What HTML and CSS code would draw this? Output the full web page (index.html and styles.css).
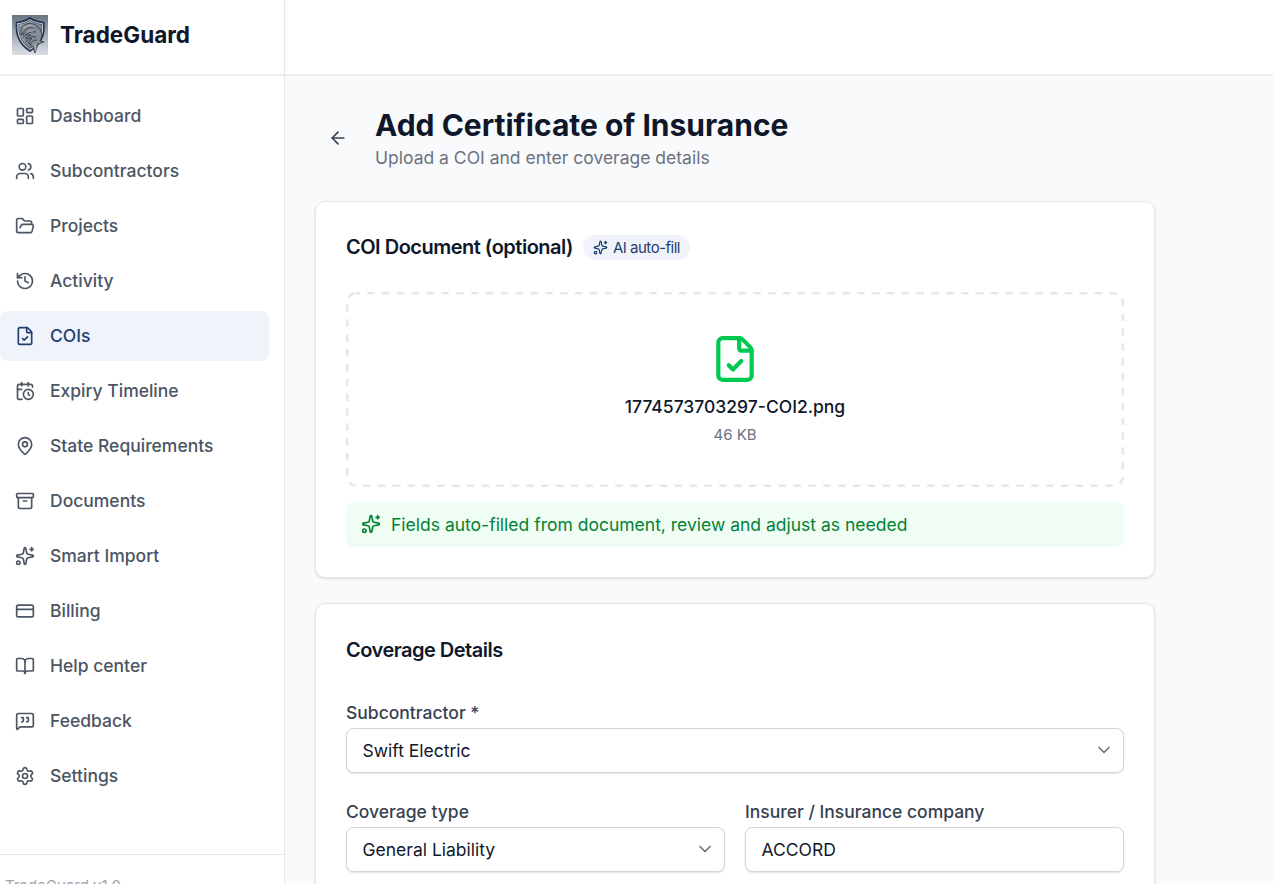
FILE: index.html
```html
<!DOCTYPE html>
<html lang="en">
<head>
    <meta charset="UTF-8">
    <meta name="viewport" content="width=device-width, initial-scale=1.0">
    <title>TradeGuard - Add Certificate of Insurance</title>
    <link rel="stylesheet" href="styles.css">
</head>
<body>
    <svg class="sprite" aria-hidden="true">
        <symbol id="sparkles" viewBox="0 0 24 24">
            <path d="M11.017 2.814a1 1 0 0 1 1.966 0l1.051 5.558a2 2 0 0 0 1.594 1.594l5.558 1.051a1 1 0 0 1 0 1.966l-5.558 1.051a2 2 0 0 0-1.594 1.594l-1.051 5.558a1 1 0 0 1-1.966 0l-1.051-5.558a2 2 0 0 0-1.594-1.594l-5.558-1.051a1 1 0 0 1 0-1.966l5.558-1.051a2 2 0 0 0 1.594-1.594z"/>
            <path d="M20 2v4"/><path d="M22 4h-4"/><circle cx="4" cy="20" r="2"/>
        </symbol>
        <symbol id="file-check" viewBox="0 0 24 24">
            <path d="M6 22a2 2 0 0 1-2-2V4a2 2 0 0 1 2-2h8a2.4 2.4 0 0 1 1.704.706l3.588 3.588A2.4 2.4 0 0 1 20 8v12a2 2 0 0 1-2 2z"/>
            <path d="M14 2v5a1 1 0 0 0 1 1h5"/><path d="m9 15 2 2 4-4"/>
        </symbol>
        <symbol id="chevron" viewBox="0 0 24 24"><path d="m6 9 6 6 6-6"/></symbol>
    </svg>

    <div class="app">
        <aside class="sidebar">
            <div class="brand">
                <svg class="logo" viewBox="0 0 36 40">
                    <defs>
                        <linearGradient id="logoBg" x1="0" y1="0" x2="0" y2="1">
                            <stop offset="0" stop-color="#68747e"/>
                            <stop offset=".5" stop-color="#a4abb5"/>
                            <stop offset="1" stop-color="#dcdee4"/>
                        </linearGradient>
                        <linearGradient id="logoShield" x1="0" y1="0" x2="1" y2="1">
                            <stop offset="0" stop-color="#b4bbc4"/>
                            <stop offset="1" stop-color="#5b6673"/>
                        </linearGradient>
                    </defs>
                    <rect width="36" height="40" fill="url(#logoBg)"/>
                    <path d="M18 3C14 6 9 7 4.500 7.500 4 17 5 28 18 36 31 28 33 17 31.500 7.500 27 7 22 6 18 3z" fill="#d5dae1" stroke="#20344f" stroke-width="1.700"/>
                    <path d="M18 5.500C14 8 10 9 6.800 9.300 6.500 18 8 27 18 33.500 28 27 30 18 29.500 9.300 26 9 22 8 18 5.500z" fill="url(#logoShield)" stroke="#344860" stroke-width=".8"/>
                    <path d="M9 12c5-4 11-5 16-1 5 4 6 10 3 15l4 1-6 2-3 9-2-6-5-5 4-3-7-1 6-3-8 0 5-3-7 3z" fill="#858e99" stroke="#303944" stroke-width=".8"/>
                    <path d="M10 19c4-6 8-8 15-6M11 23c3-5 7-7 13-6M14 27c2-4 5-6 10-5M18 30c1-3 3-5 7-5" fill="none" stroke="#303944" stroke-width=".9"/>
                    <path d="M12 13c4-3 8-3 12 0M12 20c3-3 5-4 9-4M23 29l1 7" fill="none" stroke="#c0c8d0" stroke-width=".8"/>
                    <circle cx="27" cy="15" r=".8" fill="#3f9f96"/><circle cx="22" cy="24" r=".8" fill="#4ba77c"/>
                </svg>
                <span class="brand-name">TradeGuard</span>
            </div>

            <nav class="nav">
                <a class="nav-item"><svg class="icon" viewBox="0 0 24 24"><rect width="7" height="9" x="3" y="3" rx="1"/><rect width="7" height="5" x="14" y="3" rx="1"/><rect width="7" height="9" x="14" y="12" rx="1"/><rect width="7" height="5" x="3" y="16" rx="1"/></svg>Dashboard</a>
                <a class="nav-item"><svg class="icon" viewBox="0 0 24 24"><path d="M16 21v-2a4 4 0 0 0-4-4H6a4 4 0 0 0-4 4v2"/><path d="M16 3.128a4 4 0 0 1 0 7.744"/><path d="M22 21v-2a4 4 0 0 0-3-3.870"/><circle cx="9" cy="7" r="4"/></svg>Subcontractors</a>
                <a class="nav-item"><svg class="icon" viewBox="0 0 24 24"><path d="m6 14 1.500-2.900A2 2 0 0 1 9.240 10H20a2 2 0 0 1 1.940 2.500l-1.540 6a2 2 0 0 1-1.950 1.500H4a2 2 0 0 1-2-2V5a2 2 0 0 1 2-2h3.900a2 2 0 0 1 1.690.900l.810 1.200a2 2 0 0 0 1.670.900H18a2 2 0 0 1 2 2v2"/></svg>Projects</a>
                <a class="nav-item"><svg class="icon" viewBox="0 0 24 24"><path d="M3 12a9 9 0 1 0 9-9 9.750 9.750 0 0 0-6.740 2.740L3 8"/><path d="M3 3v5h5"/><path d="M12 7v5l4 2"/></svg>Activity</a>
                <a class="nav-item active"><svg class="icon"><use href="#file-check"/></svg>COIs</a>
                <a class="nav-item"><svg class="icon" viewBox="0 0 24 24"><path d="M16 14v2.200l1.600 1"/><path d="M16 2v4"/><path d="M21 7.500V6a2 2 0 0 0-2-2H5a2 2 0 0 0-2 2v14a2 2 0 0 0 2 2h3.500"/><path d="M3 10h5"/><path d="M8 2v4"/><circle cx="16" cy="16" r="6"/></svg>Expiry Timeline</a>
                <a class="nav-item"><svg class="icon" viewBox="0 0 24 24"><path d="M20 10c0 4.993-5.539 10.193-7.399 11.799a1 1 0 0 1-1.202 0C9.539 20.193 4 14.993 4 10a8 8 0 0 1 16 0"/><circle cx="12" cy="10" r="3"/></svg>State Requirements</a>
                <a class="nav-item"><svg class="icon" viewBox="0 0 24 24"><rect width="20" height="5" x="2" y="3" rx="1"/><path d="M4 8v11a2 2 0 0 0 2 2h12a2 2 0 0 0 2-2V8"/><path d="M10 12h4"/></svg>Documents</a>
                <a class="nav-item"><svg class="icon"><use href="#sparkles"/></svg>Smart Import</a>
                <a class="nav-item"><svg class="icon" viewBox="0 0 24 24"><rect width="20" height="14" x="2" y="5" rx="2"/><path d="M2 10h20"/></svg>Billing</a>
                <a class="nav-item"><svg class="icon" viewBox="0 0 24 24"><path d="M12 7v14"/><path d="M3 18a1 1 0 0 1-1-1V4a1 1 0 0 1 1-1h5a4 4 0 0 1 4 4 4 4 0 0 1 4-4h5a1 1 0 0 1 1 1v13a1 1 0 0 1-1 1h-6a3 3 0 0 0-3 3 3 3 0 0 0-3-3z"/></svg>Help center</a>
                <a class="nav-item"><svg class="icon" viewBox="0 0 24 24"><path d="M22 17a2 2 0 0 1-2 2H6.828a2 2 0 0 0-1.414.586l-2.202 2.202A.710.710 0 0 1 2 21.286V5a2 2 0 0 1 2-2h16a2 2 0 0 1 2 2z"/><path d="M14 13a2 2 0 0 0 2-2V8h-2"/><path d="M8 13a2 2 0 0 0 2-2V8H8"/></svg>Feedback</a>
                <a class="nav-item"><svg class="icon" viewBox="0 0 24 24"><path d="M9.671 4.136a2.340 2.340 0 0 1 4.659 0 2.340 2.340 0 0 0 3.319 1.915 2.340 2.340 0 0 1 2.330 4.033 2.340 2.340 0 0 0 0 3.831 2.340 2.340 0 0 1-2.330 4.033 2.340 2.340 0 0 0-3.319 1.915 2.340 2.340 0 0 1-4.659 0 2.340 2.340 0 0 0-3.320-1.915 2.340 2.340 0 0 1-2.330-4.033 2.340 2.340 0 0 0 0-3.831A2.340 2.340 0 0 1 6.350 6.051a2.340 2.340 0 0 0 3.319-1.915"/><circle cx="12" cy="12" r="3"/></svg>Settings</a>
            </nav>

            <div class="sidebar-footer">TradeGuard v1.0</div>
        </aside>

        <div class="main">
            <header class="topbar"></header>
            <main class="content">
                <div class="page-head">
                    <button class="back" aria-label="Back"><svg class="icon" viewBox="0 0 24 24"><path d="m12 19-7-7 7-7"/><path d="M19 12H5"/></svg></button>
                    <div>
                        <h1>Add Certificate of Insurance</h1>
                        <p class="subtitle">Upload a COI and enter coverage details</p>
                    </div>
                </div>

                <section class="card">
                    <div class="card-head">
                        <h2>COI Document (optional)</h2>
                        <span class="badge"><svg class="icon"><use href="#sparkles"/></svg>AI auto-fill</span>
                    </div>
                    <div class="dropzone">
                        <svg class="drop-outline"><rect x="1.250" y="1.250" width="775.500" height="192.500" rx="8.750"/></svg>
                        <svg class="icon"><use href="#file-check"/></svg>
                        <p class="file-name">1774573703297-COI2.png</p>
                        <p class="file-size">46 KB</p>
                    </div>
                    <div class="notice"><svg class="icon"><use href="#sparkles"/></svg><span>Fields auto-filled from document, review and adjust as needed</span></div>
                </section>

                <section class="card">
                    <div class="card-head details-head">
                        <h2>Coverage Details</h2>
                    </div>
                    <div class="form">
                        <div class="field wide">
                            <label>Subcontractor *</label>
                            <div class="control">Swift Electric<svg class="icon"><use href="#chevron"/></svg></div>
                        </div>
                        <div class="field">
                            <label>Coverage type</label>
                            <div class="control">General Liability<svg class="icon"><use href="#chevron"/></svg></div>
                        </div>
                        <div class="field">
                            <label>Insurer / Insurance company</label>
                            <div class="control">ACCORD</div>
                        </div>
                    </div>
                </section>
            </main>
        </div>
    </div>
</body>
</html>
```
FILE: styles.css
```css
* {
    box-sizing: border-box;
}

body {
    margin: 0;
    font-family: Inter, "Liberation Sans", sans-serif;
    font-size: 17.5px;
    line-height: 25px;
    color: #0f172a;
    background: #f9fafb;
}

h1, h2, p {
    margin: 0;
}

.sprite {
    display: none;
}

.icon {
    width: 20px;
    height: 20px;
    flex-shrink: 0;
    fill: none;
    stroke: currentColor;
    stroke-width: 2;
    stroke-linecap: round;
    stroke-linejoin: round;
}

.app {
    display: flex;
    height: 100vh;
    overflow: hidden;
}

/* sidebar */
.sidebar {
    width: 285px;
    flex-shrink: 0;
    display: flex;
    flex-direction: column;
    background: #fff;
    border-right: 1px solid #e5e7eb;
}

.brand {
    height: 76px;
    flex-shrink: 0;
    display: flex;
    align-items: center;
    gap: 12px;
    padding: 0 12px 4px;
    border-bottom: 2px solid #ededf0;
}

.logo {
    width: 36px;
    height: 40px;
}

.brand-name {
    font-size: 22.5px;
    font-weight: 700;
    line-height: 26px;
}

.nav {
    flex-shrink: 0;
    display: flex;
    flex-direction: column;
    gap: 5px;
    padding: 14.5px 15px 0 0;
}

.nav-item {
    height: 50px;
    display: flex;
    align-items: center;
    gap: 15px;
    padding: 0 15px;
    border-radius: 7.5px;
    font-weight: 500;
    color: #4b5563;
}

.nav-item.active {
    background: #f0f3fa;
    color: #1e4070;
}

.sidebar-footer {
    height: 30px;
    flex-shrink: 0;
    margin-top: auto;
    padding: 21px 5px 0;
    border-top: 1px solid #e5e7eb;
    font-size: 15px;
    line-height: 20px;
    color: #9ca3af;
    overflow: hidden;
}

/* page */
.main {
    flex: 1;
    min-width: 0;
}

.topbar {
    height: 76px;
    background: #fff;
    border-bottom: 2px solid #ededf0;
}

.content {
    width: 900px;
    padding: 29px 30px;
}

.page-head {
    display: flex;
    align-items: center;
    gap: 15px;
    margin-bottom: 30.5px;
}

.back {
    width: 45px;
    height: 45px;
    display: flex;
    align-items: center;
    justify-content: center;
    padding: 0;
    border: none;
    background: none;
    color: #374151;
}

h1 {
    padding-top: 1px;
    font-size: 30px;
    line-height: 39px;
    font-weight: 700;
}

.subtitle {
    color: #6b7280;
}

.card {
    margin-bottom: 25px;
    padding: 30px;
    background: #fff;
    border: 1px solid #e5e7eb;
    border-radius: 10px;
    box-shadow: 0 1px 3px rgba(0, 0, 0, 0.1), 0 1px 2px -1px rgba(0, 0, 0, 0.1);
}

.card-head {
    height: 30px;
    display: flex;
    align-items: center;
    gap: 10px;
    padding-top: 1px;
    margin-bottom: 30px;
}

.details-head {
    padding-top: 3px;
}

h2 {
    font-size: 20px;
    font-weight: 600;
    letter-spacing: -0.5px;
}

.badge {
    height: 25px;
    display: flex;
    align-items: center;
    gap: 5px;
    padding: 0 10px;
    border-radius: 13px;
    background: #f0f3fa;
    color: #1e4070;
    font-size: 15px;
    letter-spacing: -0.5px;
}

.badge .icon {
    width: 15px;
    height: 15px;
}

.dropzone {
    position: relative;
    height: 195px;
    display: flex;
    flex-direction: column;
    align-items: center;
    padding-top: 42.5px;
}

.drop-outline {
    position: absolute;
    inset: 0;
    width: 100%;
    height: 100%;
    fill: none;
    stroke: #e5e7eb;
    stroke-width: 2.5;
    stroke-dasharray: 7.5 7.35;
    stroke-dashoffset: 3.8;
}

.dropzone .icon {
    width: 50px;
    height: 50px;
    color: #00c950;
}

.file-name {
    margin-top: 10px;
    font-weight: 500;
}

.file-size {
    margin-top: 6px;
    font-size: 15px;
    line-height: 20px;
    color: #6b7280;
}

.notice {
    height: 45px;
    display: flex;
    align-items: center;
    gap: 10px;
    margin-top: 15px;
    padding: 0 15px;
    border-radius: 7.5px;
    background: #f0fdf4;
    color: #008236;
}

/* form */
.form {
    display: grid;
    grid-template-columns: 1fr 1fr;
    gap: 26px 20px;
    padding-top: 6px;
}

.wide {
    grid-column: span 2;
}

.field label {
    display: block;
    margin-bottom: 3px;
    font-weight: 500;
    color: #374151;
}

.control {
    height: 45px;
    display: flex;
    align-items: center;
    justify-content: space-between;
    padding: 0 9.5px 0 15.5px;
    background: #fff;
    border: 1px solid #d1d5db;
    border-radius: 7.5px;
    box-shadow: 0 1px 2px rgba(0, 0, 0, 0.12);
}

.control .icon {
    color: #6b7280;
}
```
